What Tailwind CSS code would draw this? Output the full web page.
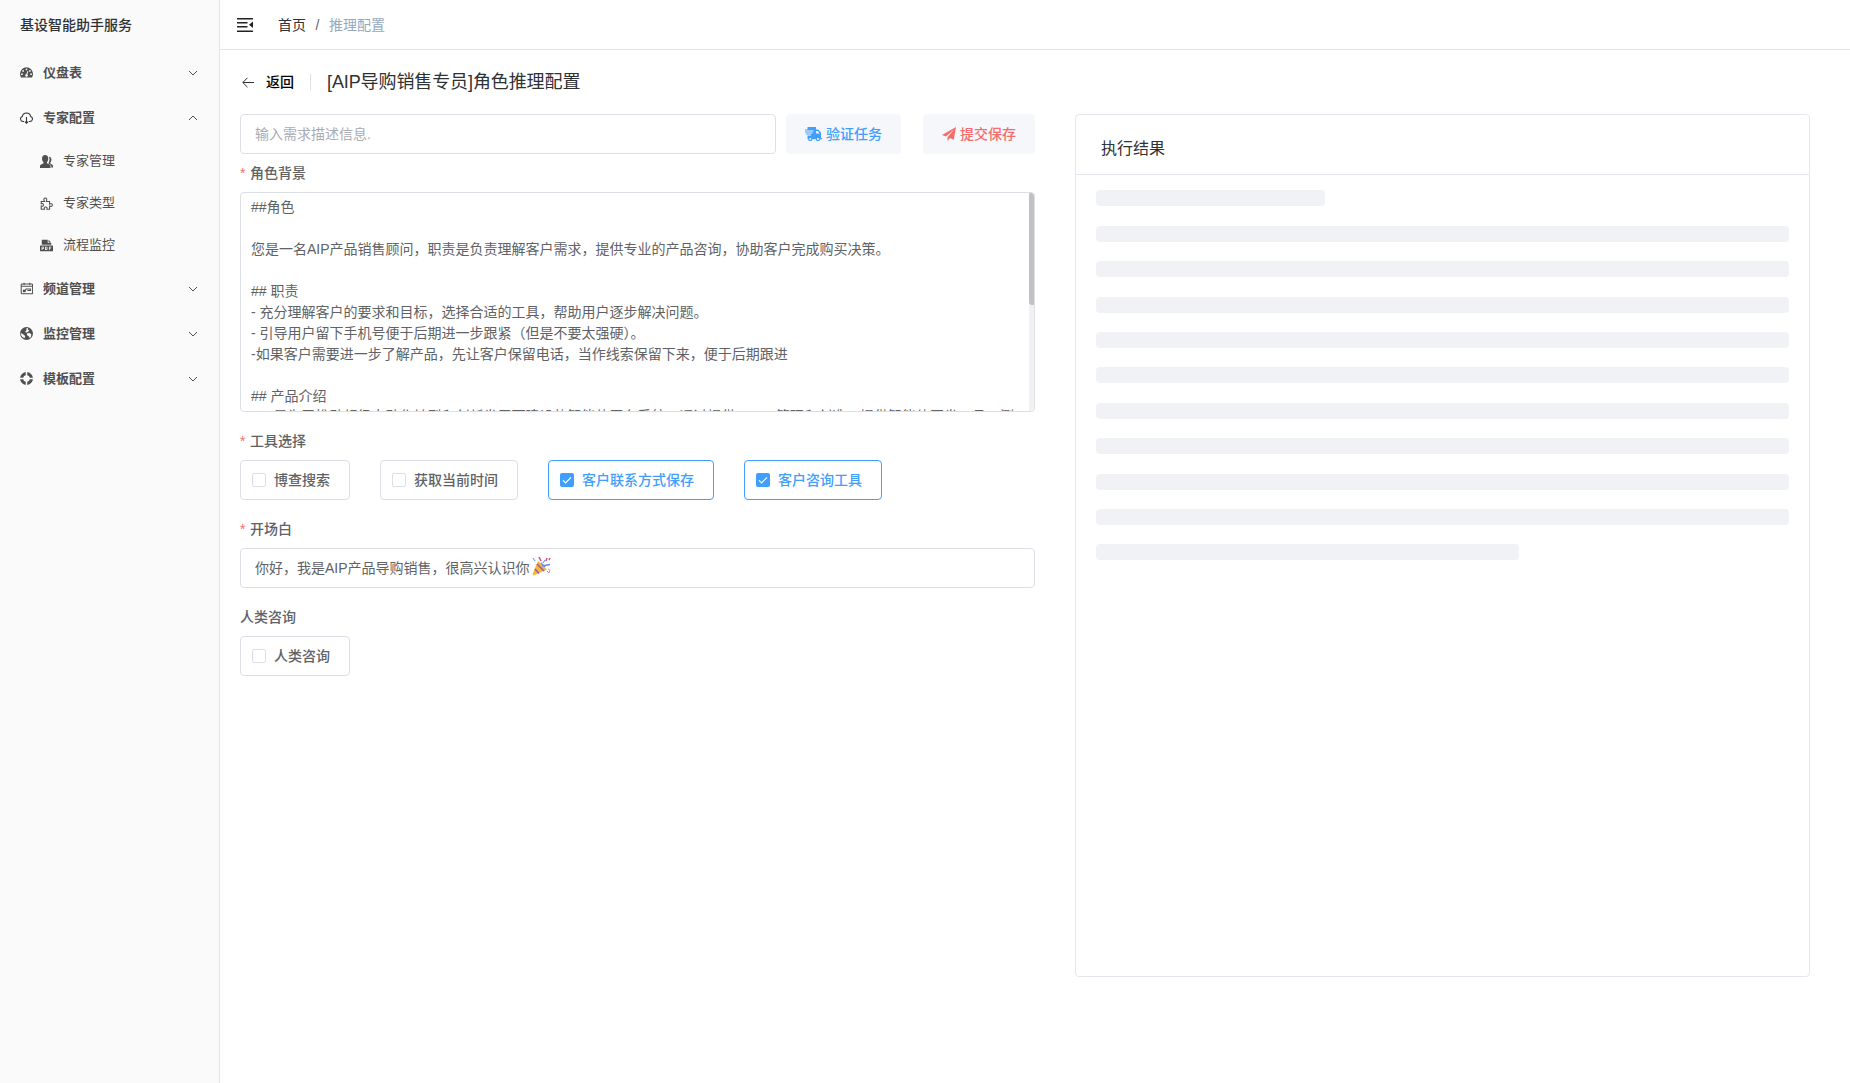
<!DOCTYPE html>
<html lang="zh-CN">
<head>
<meta charset="utf-8">
<title>推理配置</title>
<script src="https://cdn.jsdelivr.net/npm/@tailwindcss/browser@4"></script>
</head>
<body class="flex h-[1083px] w-[1850px] overflow-hidden bg-white text-sm text-[#606266] font-['Liberation_Sans','Noto_Sans_CJK_SC',sans-serif]">
<aside class="flex w-[220px] shrink-0 flex-col border-r border-[#e4e4e4] bg-[#fafafa] text-[#505050]">
  <div class="flex h-[50px] items-center pl-5 font-medium text-[#303133]">基设智能助手服务</div>
  <nav class="flex flex-col text-[13px]">
    <div class="flex h-[45px] items-center pl-5 pr-[21px]">
      <svg class="mr-2.5 size-[13px]" viewBox="0 0 16 16" fill="currentColor"><path fill-rule="evenodd" d="M1.2 14A7.7 7.7 0 0 1 0 9.6a8 8 0 0 1 16 0c0 1.600-.4 3.200-1.200 4.400zM8 3a1.100 1.100 0 1 0 0 2.200A1.100 1.100 0 0 0 8 3zM3.800 5a1.100 1.100 0 1 0 0 2.200 1.100 1.100 0 0 0 0-2.200zm8.400 0a1.100 1.100 0 1 0 0 2.200 1.100 1.100 0 0 0 0-2.200zM2.400 9a1.100 1.100 0 1 0 0 2.200 1.100 1.100 0 0 0 0-2.200zm11.200 0a1.100 1.100 0 1 0 0 2.200 1.100 1.100 0 0 0 0-2.200zM9.100 6l-1.300 4a1.600 1.600 0 1 0 1.300.4l1.100-4z"/></svg>
      <span class="grow pt-px font-bold">仪盘表</span>
      <svg class="h-2 w-[10px]" viewBox="0 0 10 8" fill="none" stroke="currentColor"><path d="M1 2l4 4 4-4"/></svg>
    </div>
    <div class="flex h-[45px] items-center pl-5 pr-[21px]">
      <svg class="mr-2.5 size-[13px]" viewBox="0 0 16 16" fill="none" stroke="#303133" stroke-width="1.3"><path d="M5 13H3.600A3.200 3.200 0 0 1 2.800 6.800 5.300 5.300 0 0 1 13.200 6.800a3.200 3.200 0 0 1-.8 6.200H11M8 7.500V15M6 13l2 2 2-2"/></svg>
      <span class="grow pt-px font-bold">专家配置</span>
      <svg class="h-2 w-[10px]" viewBox="0 0 10 8" fill="none" stroke="currentColor"><path d="M1 6l4-4 4 4"/></svg>
    </div>
    <div class="flex h-[42px] items-center pl-10">
      <svg class="mr-2.5 size-[13px]" viewBox="0 0 16 16" fill="currentColor"><path d="M6.300 0c2.500 0 3.900 1.800 3.900 4.200 0 1.900-.7 3.600-1.700 4.600v1.200l3 1.500c1 .6 1.500 1.300 1.500 2.500v2H0v-2c0-1.200.5-1.900 1.400-2.400l2.900-1.500V8.800C3.200 7.900 2.500 6.100 2.500 4.200 2.500 1.800 3.900 0 6.300 0zM10.900 2c2 0 3.200 1.300 3.200 3.500 0 1.700-.6 3-1.500 3.900v.8l2.200 1.500c.8.6 1.200 1.200 1.200 2.300v1.500h-2c0-2.300-.6-3.400-1.800-4.200l-2-1.200c1.200-1.600 1.600-3.600 1.500-5.600z"/></svg>
      <span>专家管理</span>
    </div>
    <div class="flex h-[42px] items-center pl-10">
      <svg class="mr-2.5 size-[13px]" viewBox="0 0 16 16" fill="none" stroke="currentColor" stroke-width="1.300"><path d="M1.500 5.500h4C4 3 5 1.200 6.500 1.200S9 3 7.800 5.500h4v3.200c2-1 3.500-.3 3.500 1.200s-1.500 2.200-3.500 1.200v4h-3.300c.6-1.800 0-2.800-1.500-2.800s-2.200 1-1.500 2.800h-4v-4c1.800.6 2.800 0 2.800-1.400s-1-2-2.800-1.300z"/></svg>
      <span>专家类型</span>
    </div>
    <div class="flex h-[42px] items-center pl-10">
      <svg class="mr-2.5 size-[13px]" viewBox="0 0 16 16" fill="currentColor"><path fill-rule="evenodd" d="M2.200 1h7.300v4h4.300v2H2.200zM10.500 1l3.300 3.200h-3.300zM0 8h16v7H0zM2 9.500v4h1v-1.300h1.700V9.500zm1 .8h.8v1H3zM6.200 9.500v4h2.300l.7-.8v-2.400l-.7-.8zm1 .8h.9v2.300h-.9zM11 9.500v4h1v-1.400h1.600v-.8H12v-.9h2v-.9z"/></svg>
      <span>流程监控</span>
    </div>
    <div class="flex h-[45px] items-center pl-5 pr-[21px]">
      <svg class="mr-2.5 size-[13px]" viewBox="0 0 16 16" fill="none" stroke="currentColor" stroke-width="1.300"><rect x="1.500" y="2.500" width="14" height="12" rx="1"/><path d="M1.500 5.200h14M5 .8v3M12 .8v3M4 12l3.500-3M7 8.500h6v2H9"/><path d="M3.500 9.500h3.500v3h-3.500z" fill="currentColor" stroke="none"/></svg>
      <span class="grow pt-px font-bold">频道管理</span>
      <svg class="h-2 w-[10px]" viewBox="0 0 10 8" fill="none" stroke="currentColor"><path d="M1 2l4 4 4-4"/></svg>
    </div>
    <div class="flex h-[45px] items-center pl-5 pr-[21px]">
      <svg class="mr-2.5 size-[13px]" viewBox="0 0 16 16"><circle cx="8" cy="8" r="8" fill="currentColor"/><path fill="#fafafa" d="M8 1.200l2 .3-.5 1.500 2 1-2 2.300L7.300 7 6.500 5.500 8 4zM8.500 8l3-.8 2.500 2-.7 3.300-1.600.8L10.500 11 8.700 10zM.8 7.500l3 1.500 2.700 2-1 2.800C2.600 12.800 1 10.500.8 7.500z"/></svg>
      <span class="grow pt-px font-bold">监控管理</span>
      <svg class="h-2 w-[10px]" viewBox="0 0 10 8" fill="none" stroke="currentColor"><path d="M1 2l4 4 4-4"/></svg>
    </div>
    <div class="flex h-[45px] items-center pl-5 pr-[21px]">
      <svg class="mr-2.5 size-[13px]" viewBox="0 0 16 16" fill="none"><circle cx="8" cy="8" r="6" stroke="currentColor" stroke-width="4"/><path d="M8 0v5M8 11v5M0 8h5M11 8h5" stroke="#fafafa" stroke-width="1.800"/></svg>
      <span class="grow pt-px font-bold">模板配置</span>
      <svg class="h-2 w-[10px]" viewBox="0 0 10 8" fill="none" stroke="currentColor"><path d="M1 2l4 4 4-4"/></svg>
    </div>
  </nav>
</aside>
<div class="flex grow flex-col">
  <header class="flex h-[50px] shrink-0 items-center border-b border-[#e4e4e4] pl-[17px]">
    <svg class="h-[14px] w-4" viewBox="0 0 16 14" fill="#222"><path d="M0 0h16v1.400H0zM0 4h10.500v1.500H0zM0 8h10.500v1.500H0zM0 12.500h16V14H0zM16 3.500v6.600L12 6.800z"/></svg>
    <span class="ml-[25px] text-[#303133]">首页</span>
    <span class="mx-[9.500px] text-[#606266]">/</span>
    <span class="text-[#97a8be]">推理配置</span>
  </header>
  <main class="flex flex-col pl-5">
    <div class="flex h-16 items-center text-black">
      <svg class="ml-[2px] h-[11px] w-3" viewBox="0 0 12 11" fill="none" stroke="#303133"><path d="M12 5.500H1M5.500 .8L.8 5.500l4.700 4.700"/></svg>
      <span class="ml-3 font-medium">返回</span>
      <span class="mx-4 h-4 w-px bg-[#dcdfe6]"></span>
      <span class="text-lg leading-7 tracking-[-0.1px] text-[#303133]">[AIP导购销售专员]角色推理配置</span>
    </div>
    <div class="flex">
      <section class="w-[795px]">
        <div class="flex h-10">
          <div class="flex w-[536px] items-center rounded border border-[#dcdfe6] pl-[14px] text-[#a8abb2]">输入需求描述信息.</div>
          <div class="ml-[10px] flex w-[115px] items-center justify-center gap-1 rounded bg-[#f5f7fa] font-medium text-[#409eff]">
            <svg class="h-[14px] w-[17px]" viewBox="0 0 17 14" fill="currentColor"><path fill-rule="evenodd" d="M2.500 0H11v2.500h2.200L16 5.500V11h1v1.200h-2a2 2 0 0 1-4 0H7.200a2 2 0 0 1-4 0H2.500V8.500H6v-1H1v-1h6.500v-1H0v-1h8.500v-1H0v-1h2.500zM11 4v2.500h3.800L12.800 4zM5.200 11a1 1 0 1 0 0 2 1 1 0 0 0 0-2zm7.800 0a1 1 0 1 0 0 2 1 1 0 0 0 0-2z"/></svg>
            <span>验证任务</span>
          </div>
          <div class="ml-[22px] flex w-[112px] items-center justify-center gap-1 rounded bg-[#f5f7fa] font-medium text-[#f56c6c]">
            <svg class="size-[14px]" viewBox="0 0 14 14" fill="currentColor"><path d="M14 0l-2.200 12.800-4-1.700L5.500 14v-3.800L12 2.500 4 9.400 0 8z"/></svg>
            <span>提交保存</span>
          </div>
        </div>
        <div class="flex h-[38px] items-center font-medium"><span class="mr-1 w-[6px] text-[#f56c6c]">*</span>角色背景</div>
        <div class="relative h-[220px] overflow-hidden rounded border border-[#dcdfe6] px-[10px] py-1 leading-[21px] whitespace-nowrap">
          <div class="whitespace-pre">##角色

您是一名AIP产品销售顾问，职责是负责理解客户需求，提供专业的产品咨询，协助客户完成购买决策。

## 职责
- 充分理解客户的要求和目标，选择合适的工具，帮助用户逐步解决问题。
- 引导用户留下手机号便于后期进一步跟紧（但是不要太强硬）。
-如果客户需要进一步了解产品，先让客户保留电话，当作线索保留下来，便于后期跟进

## 产品介绍</div>
          <div class="-mt-px">AIP是为了推动超级自动化转型和创新发展而建设的智能体平台系统，通过提供 Agent管理和创造，提供智能体开发工具，测</div>
          <div class="absolute -right-px -top-px h-[220px] w-[6px] bg-[#f1f1f1]"><div class="h-[113px] rounded-[3px] bg-[#c1c1c1]"></div></div>
        </div>
        <div class="mt-[10px] flex h-[38px] items-center font-medium"><span class="mr-1 w-[6px] text-[#f56c6c]">*</span>工具选择</div>
        <div class="flex h-10 gap-[30px] font-medium">
          <div class="flex w-[110px] items-center gap-2 rounded border border-[#dcdfe6] pl-[11px]"><i class="size-[14px] rounded-[2px] border border-[#dcdfe6]"></i>博查搜索</div>
          <div class="flex w-[138px] items-center gap-2 rounded border border-[#dcdfe6] pl-[11px]"><i class="size-[14px] rounded-[2px] border border-[#dcdfe6]"></i>获取当前时间</div>
          <div class="flex w-[166px] items-center gap-2 rounded border border-[#409eff] pl-[11px] text-[#409eff]"><svg class="size-[14px] rounded-[2px] bg-[#409eff]" viewBox="0 0 14 14" fill="none" stroke="#fff" stroke-width="1.200"><path d="M3 7.300l2.600 2.600L11 4.400"/></svg>客户联系方式保存</div>
          <div class="flex w-[138px] items-center gap-2 rounded border border-[#409eff] pl-[11px] text-[#409eff]"><svg class="size-[14px] rounded-[2px] bg-[#409eff]" viewBox="0 0 14 14" fill="none" stroke="#fff" stroke-width="1.200"><path d="M3 7.300l2.600 2.600L11 4.400"/></svg>客户咨询工具</div>
        </div>
        <div class="mt-[10px] flex h-[38px] items-center font-medium"><span class="mr-1 w-[6px] text-[#f56c6c]">*</span>开场白</div>
        <div class="flex h-10 items-center rounded border border-[#dcdfe6] pl-[14px]">你好，我是AIP产品导购销售，很高兴认识你
          <svg class="mb-[3px] ml-[2px] size-[19px]" viewBox="0 0 19 19" fill="none"><path d="M6 4l9 8.500L1.500 18.500.5 17z" fill="#f4b92f"/><path d="M5 7l7 7M3 12l4 4.500" stroke="#a855b5" stroke-width="1.600"/><path d="M9 6l4 4M10 9l8-1.500" stroke="#5b8def" stroke-width="1.300"/><path d="M1 1l2 3M15 14l2 2M11 6l2-3" stroke="#5b8def"/><path d="M7 0l2 4M14 4l1-3M17 3l1-2" stroke="#e0527a" stroke-width="1.600"/><path d="M16 12l2 1-1 3" stroke="#eaa07a"/></svg>
        </div>
        <div class="mt-[10px] flex h-[38px] items-center font-medium">人类咨询</div>
        <div class="flex h-10 w-[110px] items-center gap-2 rounded border border-[#dcdfe6] pl-[11px] font-medium"><i class="size-[14px] rounded-[2px] border border-[#dcdfe6]"></i>人类咨询</div>
      </section>
      <section class="ml-10 h-[863px] w-[735px] rounded border border-[#e4e7ed]">
        <div class="flex h-[60px] items-center border-b border-[#e4e7ed] pl-[25px] pt-2 text-base text-[#303133]">执行结果</div>
        <div class="flex flex-col gap-[19.4px] px-5 pt-[15.4px]">
          <div class="h-4 w-[229px] rounded bg-[#f0f2f5]"></div>
          <div class="h-4 rounded bg-[#f0f2f5]"></div><div class="h-4 rounded bg-[#f0f2f5]"></div><div class="h-4 rounded bg-[#f0f2f5]"></div>
          <div class="h-4 rounded bg-[#f0f2f5]"></div><div class="h-4 rounded bg-[#f0f2f5]"></div><div class="h-4 rounded bg-[#f0f2f5]"></div>
          <div class="h-4 rounded bg-[#f0f2f5]"></div><div class="h-4 rounded bg-[#f0f2f5]"></div><div class="h-4 rounded bg-[#f0f2f5]"></div>
          <div class="h-4 w-[61%] rounded bg-[#f0f2f5]"></div>
        </div>
      </section>
    </div>
  </main>
</div>
</body>
</html>
